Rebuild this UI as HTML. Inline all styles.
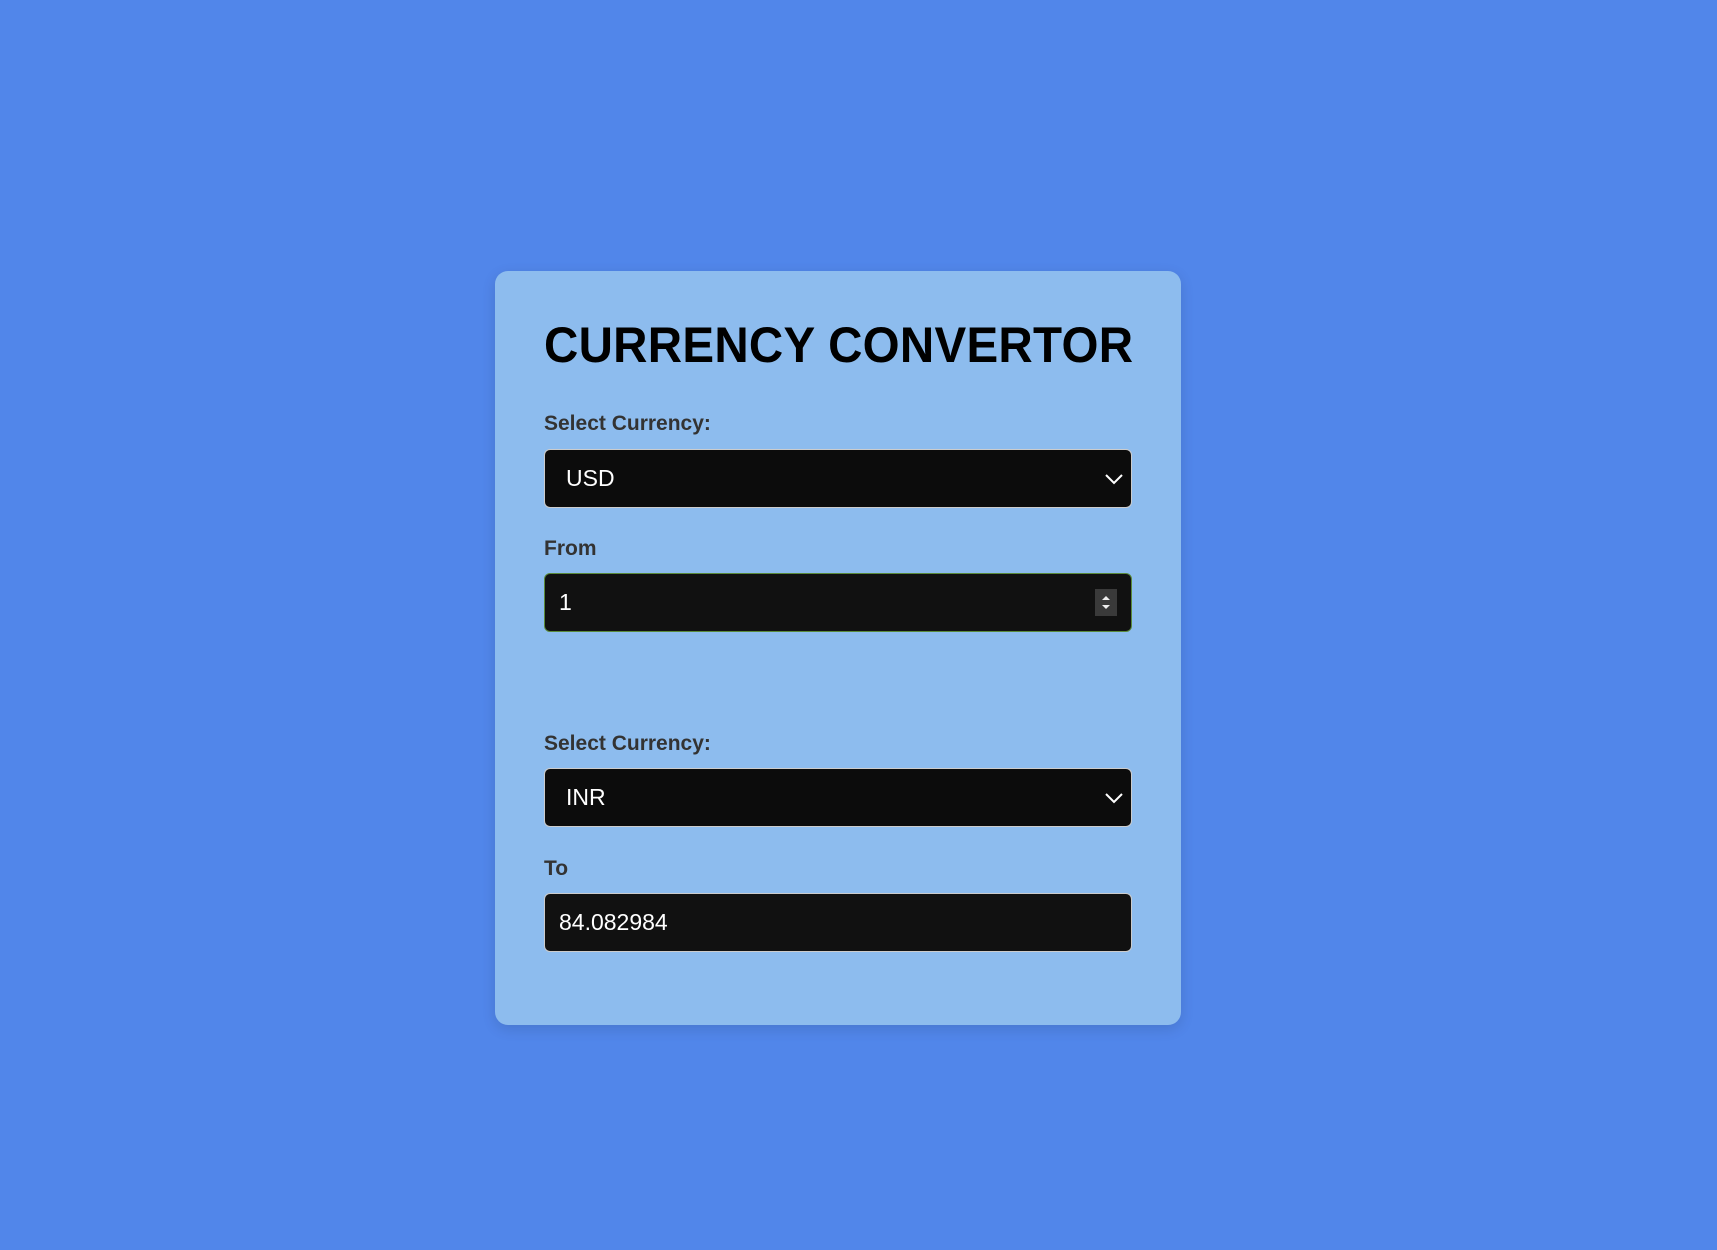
<!DOCTYPE html>
<html><head><style>
body{margin:0;width:1717px;height:1250px;background:#5186ea;font-family:"Liberation Sans",Arial,sans-serif;position:relative;overflow:hidden}
.card{position:absolute;left:495px;top:271px;width:686px;height:754px;background:#8dbcee;border-radius:13px;box-shadow:0 4px 14px rgba(0,0,0,0.12)}
h1{position:absolute;left:49px;top:45px;margin:0;font-size:50px;font-weight:bold;color:#000;white-space:nowrap;letter-spacing:0.3px;transform:scaleX(0.95);transform-origin:0 0}
.lab{position:absolute;left:49px;font-size:21px;font-weight:bold;color:#333}
.box{position:absolute;left:49px;width:586px;height:57px;border:1px solid #ccc;border-radius:6px;background:#0c0c0c;color:#fff;font-size:23px;line-height:57px;box-sizing:content-box}
.chev{position:absolute;right:7px;top:22px;display:block}
</style></head><body>
<div class="card">
<h1>CURRENCY CONVERTOR</h1>
<div class="lab" style="top:141px">Select Currency:</div>
<div class="box" style="top:178px"><span style="margin-left:21px">USD</span><svg class="chev" width="20" height="14" viewBox="0 0 20 14"><path d="M2 3l8 8 8-8" fill="none" stroke="#fff" stroke-width="2"/></svg></div>
<div class="lab" style="top:266px">From</div>
<div class="box" style="top:302px;border-color:#5a8a3a;background:#111"><span style="margin-left:14px">1</span><div style="position:absolute;right:14px;top:15px;width:22px;height:27px;background:#3a3a3a"><svg style="display:block" width="22" height="27" viewBox="0 0 22 27"><path d="M7 11l4-4 4 4z M7 16l4 4 4-4z" fill="#eee"/></svg></div></div>
<div class="lab" style="top:461px">Select Currency:</div>
<div class="box" style="top:497px"><span style="margin-left:21px">INR</span><svg class="chev" width="20" height="14" viewBox="0 0 20 14"><path d="M2 3l8 8 8-8" fill="none" stroke="#fff" stroke-width="2"/></svg></div>
<div class="lab" style="top:586px">To</div>
<div class="box" style="top:622px;background:#111"><span style="margin-left:14px">84.082984</span></div>
</div>
</body></html>
